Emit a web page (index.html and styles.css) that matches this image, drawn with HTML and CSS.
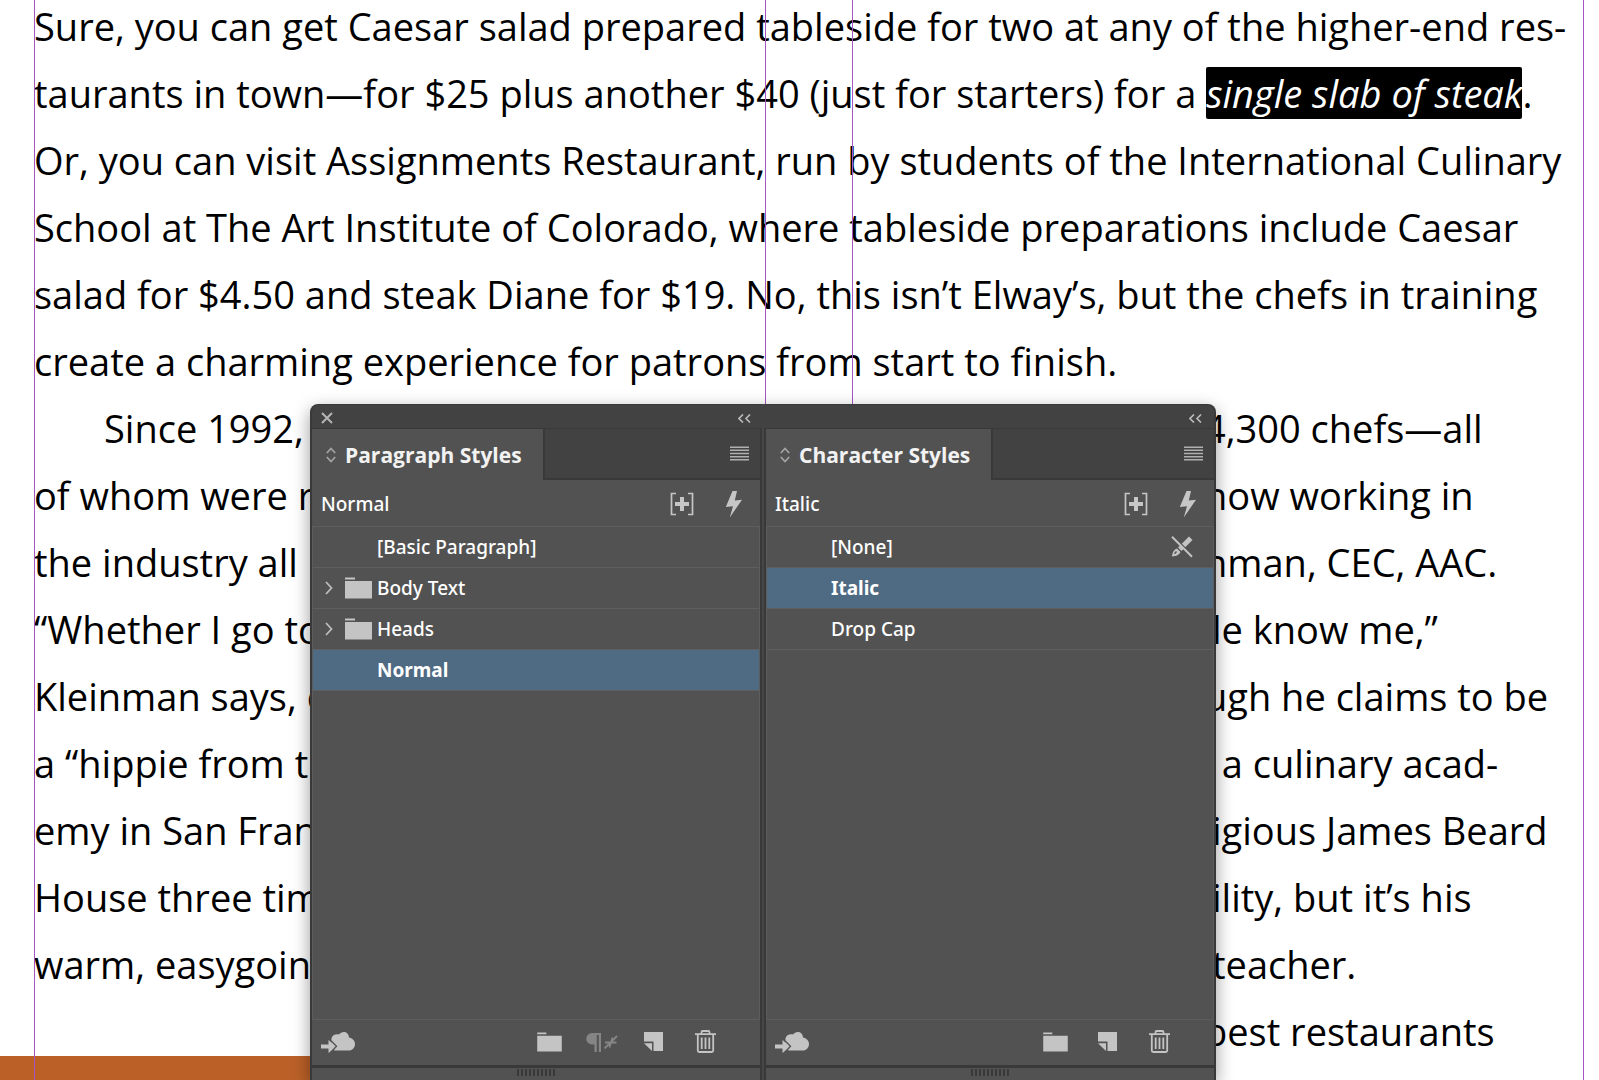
FILE: index.html
```html
<!DOCTYPE html>
<html lang="en">
<head>
<meta charset="utf-8">
<title>Paragraph and Character Styles</title>
<link rel="stylesheet" href="styles.css">
</head>
<body>
<svg class="symbols" aria-hidden="true">
  <symbol id="close" viewBox="0 0 12 12"><path d="M1 1l10 10M11 1L1 11" fill="none" stroke="#b4b4b4" stroke-width="2"/></symbol>
  <symbol id="collapse" viewBox="0 0 13 9"><path d="M5 .5l-4 4 4 4M12 .5l-4 4 4 4" fill="none" stroke="#bcbcbc" stroke-width="1.6"/></symbol>
  <symbol id="updown" viewBox="0 0 10 16"><path d="M.8 6L5 1.4 9.200 6M.8 10L5 14.600 9.200 10" fill="none" stroke="#a4a4a4" stroke-width="1.700"/></symbol>
  <symbol id="menu" viewBox="0 0 19 15"><path d="M0 1.200h19M0 4.350h19M0 7.500h19M0 10.650h19M0 13.800h19" stroke="#b0b0b0" stroke-width="1.500"/></symbol>
  <symbol id="plus" viewBox="0 0 24 24"><path d="M6 1.500H1.500v21H6M18 1.500h4.500v21H18" fill="none" stroke="#c6c6c6" stroke-width="1.700"/><path d="M12 5v14M5 12h14" stroke="#c6c6c6" stroke-width="4"/></symbol>
  <symbol id="bolt" viewBox="0 0 18 27"><path d="M7.500 0h4.500L9.800 9.500l7.200-.8L4.800 26.500 8 15.200.8 16z" fill="#c6c6c6"/></symbol>
  <symbol id="chevron" viewBox="0 0 8 14"><path d="M1 1l5.500 6L1 13" fill="none" stroke="#bdbdbd" stroke-width="1.800"/></symbol>
  <symbol id="folder" viewBox="0 0 27 22"><path d="M0 .5h10v2H0zM0 4h27v17.500H0z" fill="#c4c4c4"/></symbol>
  <symbol id="nobrush" viewBox="0 0 22 22"><path d="M15 3.500L18 .5 21.500 4 10.500 15 7 11.500z" fill="#c4c4c4"/><path d="M6 12.500l3.500 3.500c-1.500 3-4 4-8.500 4.500.5-4 1.500-6.500 5-8z" fill="#c4c4c4"/><path d="M3.500 17.800l2-2.300" stroke="#525252" stroke-width="1.300"/><path d="M2 0l20 20.500" stroke="#525252" stroke-width="2"/><path d="M1 .8l20 20" stroke="#c4c4c4" stroke-width="2"/></symbol>
  <symbol id="cloud" viewBox="0 0 34 22"><path d="M14 19.500C11 19 10 8.500 10.500 7.500 11 4 15 2.500 18 3.500 21-1 28 .5 28 6.500c3 .5 6 3 6 6.500 0 4-3 6.500-6 6.500z" fill="#c4c4c4"/><path d="M0 13.500h7.500V9l8 6.500-8 6.500v-4.500H0z" fill="#c4c4c4"/><path d="M10 9.700l5.500 5.600-5.500 6" fill="none" stroke="#525252" stroke-width="1.300"/></symbol>
  <symbol id="clear" viewBox="0 0 33 22"><path d="M7 2h9v19h-2.200V4h-2v17H9.500v-7.500H7A5.700 5.700 0 0 1 7 2z" fill="#858585"/><path d="M19.500 17.500L32 5M20 11.500h11.500M24.500 16.500l3-10" stroke="#858585" stroke-width="1.800" fill="none"/></symbol>
  <symbol id="page" viewBox="0 0 19 19"><path d="M0 0h19v19H9.500V9.500H0z" fill="#c4c4c4"/><path d="M0 11.200h8V19z" fill="#c4c4c4"/></symbol>
  <symbol id="trash" viewBox="0 0 21 23"><path d="M0 4.200h21M6.500 4V2.200q0-1.200 1.200-1.200h5.600q1.200 0 1.200 1.200V4M2.800 4.500v16q0 1.500 1.500 1.500h12.400q1.500 0 1.500-1.500v-16M6.700 7.500v11.500M10.500 7.500v11.500M14.300 7.500v11.500" fill="none" stroke="#c4c4c4" stroke-width="1.800"/></symbol>
</svg>

<main class="page">
  <div class="color-block"></div>

  <article class="story">
    <p>Sure, you can get Caesar salad prepared tableside for two at any of the higher-end res-</p>
    <p>taurants in town—for $25 plus another $40 (just for starters) for a <mark>single slab of steak</mark>.</p>
    <p>Or, you can visit Assignments Restaurant, run by students of the International Culinary</p>
    <p>School at The Art Institute of Colorado, where tableside preparations include Caesar</p>
    <p>salad for $4.50 and steak Diane for $19. No, this isn’t Elway’s, but the chefs in training</p>
    <p>create a charming experience for patrons from start to finish.</p>
    <div class="split"><p class="indent">Since 1992,</p><p>4,300 chefs—all</p></div>
    <div class="split"><p>of whom were r</p><p>now working in</p></div>
    <div class="split"><p>the industry all</p><p>nman, CEC, AAC.</p></div>
    <div class="split"><p>“Whether I go to</p><p class="inset">le know me,”</p></div>
    <div class="split"><p>Kleinman says, c</p><p>ugh he claims to be</p></div>
    <div class="split"><p>a “hippie from t</p><p class="inset">&nbsp;a culinary acad-</p></div>
    <div class="split"><p>emy in San Fran</p><p class="inset">igious James Beard</p></div>
    <div class="split"><p>House three tim</p><p class="inset">ility, but it’s his</p></div>
    <div class="split"><p>warm, easygoin</p><p class="inset">teacher.</p></div>
    <div class="split"><p></p><p>best restaurants</p></div>
  </article>

  <div class="guides"><div class="guide-column"></div><div class="guide-column"></div></div>

  <div class="window">
    <section class="panel">
      <div class="titlebar">
        <button type="button" aria-label="Close"><svg width="12" height="12"><use href="#close"/></svg></button>
        <button type="button" class="end" aria-label="Collapse"><svg width="13" height="9"><use href="#collapse"/></svg></button>
      </div>
      <div class="panel-body">
        <div class="tabs">
          <button type="button" class="tab"><svg width="10" height="16"><use href="#updown"/></svg>Paragraph Styles</button>
          <div class="tab-rest"><button type="button" aria-label="Panel menu"><svg width="19" height="15"><use href="#menu"/></svg></button></div>
        </div>
        <div class="current">
          <span>Normal</span>
          <div class="tools">
            <button type="button" aria-label="Style override highlighter"><svg width="24" height="24"><use href="#plus"/></svg></button>
            <button type="button" aria-label="Quick apply"><svg width="18" height="27"><use href="#bolt"/></svg></button>
          </div>
        </div>
        <ul class="styles">
          <li>[Basic Paragraph]</li>
          <li><span class="group"><svg width="8" height="14"><use href="#chevron"/></svg><svg width="27" height="22"><use href="#folder"/></svg></span>Body Text</li>
          <li><span class="group"><svg width="8" height="14"><use href="#chevron"/></svg><svg width="27" height="22"><use href="#folder"/></svg></span>Heads</li>
          <li class="selected">Normal</li>
        </ul>
        <div class="actions">
          <button type="button" class="cloud" aria-label="Add to library"><svg width="34" height="22"><use href="#cloud"/></svg></button>
          <div class="tools">
            <button type="button" aria-label="New style group"><svg width="25" height="20"><use href="#folder"/></svg></button>
            <button type="button" aria-label="Clear overrides" disabled><svg width="33" height="22"><use href="#clear"/></svg></button>
            <button type="button" aria-label="New style"><svg width="19" height="19"><use href="#page"/></svg></button>
            <button type="button" aria-label="Delete style"><svg width="21" height="23"><use href="#trash"/></svg></button>
          </div>
        </div>
        <div class="resize"><span class="grip"></span></div>
      </div>
    </section>

    <section class="panel">
      <div class="titlebar">
        <button type="button" class="end" aria-label="Collapse"><svg width="13" height="9"><use href="#collapse"/></svg></button>
      </div>
      <div class="panel-body">
        <div class="tabs">
          <button type="button" class="tab"><svg width="10" height="16"><use href="#updown"/></svg>Character Styles</button>
          <div class="tab-rest"><button type="button" aria-label="Panel menu"><svg width="19" height="15"><use href="#menu"/></svg></button></div>
        </div>
        <div class="current">
          <span>Italic</span>
          <div class="tools">
            <button type="button" aria-label="Style override highlighter"><svg width="24" height="24"><use href="#plus"/></svg></button>
            <button type="button" aria-label="Quick apply"><svg width="18" height="27"><use href="#bolt"/></svg></button>
          </div>
        </div>
        <ul class="styles">
          <li>[None]<svg class="flag" width="22" height="22"><use href="#nobrush"/></svg></li>
          <li class="selected">Italic</li>
          <li>Drop Cap</li>
        </ul>
        <div class="actions">
          <button type="button" class="cloud" aria-label="Add to library"><svg width="34" height="22"><use href="#cloud"/></svg></button>
          <div class="tools">
            <button type="button" aria-label="New style group"><svg width="25" height="20"><use href="#folder"/></svg></button>
            <button type="button" aria-label="New style"><svg width="19" height="19"><use href="#page"/></svg></button>
            <button type="button" aria-label="Delete style"><svg width="21" height="23"><use href="#trash"/></svg></button>
          </div>
        </div>
        <div class="resize"><span class="grip"></span></div>
      </div>
    </section>
  </div>
</main>
</body>
</html>
```
FILE: styles.css
```css
* { box-sizing: border-box; }

body {
  margin: 0;
  background: #fff;
  color: #000;
  font-family: "Open Sans", "Noto Sans", sans-serif;
}

p, ul { margin: 0; padding: 0; }
svg { display: block; flex: none; }
.symbols { position: absolute; width: 0; height: 0; }

button {
  display: flex;
  align-items: center;
  justify-content: center;
  padding: 0;
  border: 0;
  background: none;
  color: inherit;
  font: inherit;
}

/* Document page */
.page {
  position: relative;
  height: 100vh;
  overflow: hidden;
}

.story {
  position: relative;
  margin-top: -7px;
  padding-left: 34px;
  font-size: 38px;
  line-height: 67px;
  white-space: nowrap;
}

.story p { min-height: 67px; }
.story .indent { padding-left: 70px; }
.story .inset { padding-left: 8px; }

.split {
  display: grid;
  grid-template-columns: 1170px 1fr;
}

mark {
  border-radius: 2px;
  background: #000;
  color: #fff;
  font-style: italic;
}

.color-block {
  position: absolute;
  left: 0;
  bottom: 0;
  width: 50%;
  height: 24px;
  background: #bb6128;
}

.guides {
  position: absolute;
  inset: 0;
  display: flex;
  gap: 86px;
  padding: 0 15px 0 34px;
}

.guide-column {
  flex: 1;
  border: solid #a556c2;
  border-width: 0 1px;
}

/* Floating panel window */
.window {
  position: absolute;
  top: 404px;
  bottom: 0;
  left: 310px;
  display: flex;
  width: 906px;
  padding: 0 2px;
  border-radius: 8px 8px 0 0;
  background: linear-gradient(90deg, #393939 calc(50% - 1px), #474747 0 calc(50% + 1px), #393939 0);
  box-shadow: 0 6px 18px rgba(0, 0, 0, .4);
  color: #fff;
  font-family: "Noto Sans", "Open Sans", sans-serif;
  font-size: 19px;
  font-weight: 500;
}

.panel {
  flex: 1;
  display: flex;
  flex-direction: column;
}

.titlebar {
  display: flex;
  align-items: center;
  height: 23px;
  margin-top: 1px;
  padding: 3px 12px 0 9px;
  background: #424242;
}

.panel:first-child .titlebar { border-radius: 7px 0 0 0; }
.panel:last-child .titlebar { border-radius: 0 7px 0 0; }
.titlebar .end { margin-left: auto; }

.panel-body {
  flex: 1;
  display: flex;
  flex-direction: column;
  border-top: 1px solid #393939;
  background: #525252;
}

.panel:first-child .panel-body { margin-right: 3px; }
.panel:last-child .panel-body { margin-left: 3px; }

.tabs {
  display: flex;
  height: 51px;
}

.tab {
  gap: 9px;
  padding: 0 21px 0 14px;
  color: #f2f2f2;
  font-family: "Open Sans", "Noto Sans", sans-serif;
  font-size: 21px;
  font-weight: 700;
}

.tab-rest {
  flex: 1;
  display: flex;
  justify-content: flex-end;
  padding-right: 11px;
  border: solid #393939;
  border-width: 0 0 2px 2px;
  background: #424242;
}

.current {
  display: flex;
  align-items: center;
  justify-content: space-between;
  height: 46px;
  padding: 2px 0 0 9px;
}

.tools { display: flex; }
.tools button { width: 52px; }

.styles {
  flex: 1;
  border: 1px solid #5d5d5d;
  list-style: none;
}

.styles li {
  display: flex;
  align-items: center;
  height: 41px;
  padding: 0 20px 0 64px;
  border-bottom: 1px solid #5e5e5e;
}

.styles .selected {
  background: #4f6a83;
  font-weight: 700;
}

.group {
  display: flex;
  align-items: center;
  gap: 12px;
  width: 52px;
  margin-left: -52px;
}

.flag { margin-left: auto; }

.actions {
  display: flex;
  justify-content: space-between;
  height: 45px;
  padding: 0 29px 2px 9px;
}

.resize {
  display: flex;
  justify-content: center;
  height: 15px;
  padding-top: 1px;
  border-top: 3px solid #393939;
}

.grip {
  width: 38px;
  height: 7px;
  background: repeating-linear-gradient(90deg, #393939 0 2px, transparent 2px 4px);
}
```
